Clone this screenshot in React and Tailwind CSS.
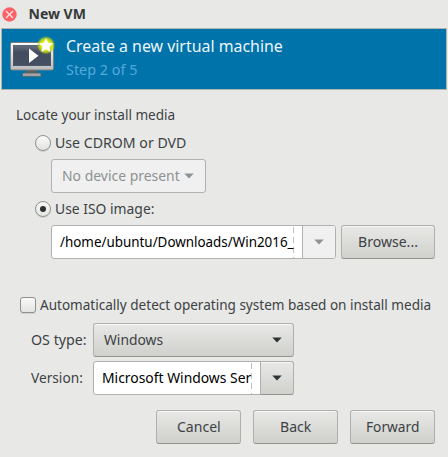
import { useLayoutEffect, useRef, useState } from "react";

// Condenses a line of text so that it takes exactly `w` pixels.
function Fit({ w, children, className = "" }) {
  const ref = useRef(null);
  const [scale, setScale] = useState(1);
  useLayoutEffect(() => {
    setScale(w / ref.current.offsetWidth);
  }, [w]);
  return (
    <span className={`inline-flex shrink-0 justify-start whitespace-nowrap pb-0.5 ${className}`} style={{ width: w }}>
      <span ref={ref} className="inline-block shrink-0 origin-left" style={{ transform: `scaleX(${scale})` }}>
        {children}
      </span>
    </span>
  );
}

function Arrow({ className = "" }) {
  return (
    <svg className={`shrink-0 ${className}`} width="10" height="6" viewBox="0 0 10 6">
      <path d="M.3 .6h9.4L5.5 5a.7.7 0 0 1-1 0z" fill="currentColor" />
    </svg>
  );
}

// Dashed line that marks text running past the edge of an entry.
function Overflow() {
  return (
    <span className="w-px shrink-0 bg-[repeating-linear-gradient(to_bottom,transparent_0_1px,#c0c0c0_1px_7px,transparent_7px_10px)]" />
  );
}

const raised =
  "border border-[#afb0ac] border-b-[#92938f] bg-gradient-to-b from-[#e8e8e6] to-[#d0d0cd] shadow-[inset_0_1px_#f7f7f6]";

function Button({ w, text, className }) {
  return (
    <button className={`flex h-[34px] items-center justify-center rounded-[3px] ${raised} ${className}`}>
      <Fit w={w}>{text}</Fit>
    </button>
  );
}

function Radio({ checked, w, text }) {
  return (
    <label className="flex h-5 items-center gap-1 pl-[35px]">
      <span className="flex size-4 items-center justify-center rounded-full border border-[#90918e] bg-gradient-to-b from-[#fafafa] to-[#e3e3e2] shadow-[0_1px_#cfcfcc]">
        {checked && <span className="size-1.5 rounded-full bg-[#2b3032]" />}
      </span>
      <Fit w={w}>{text}</Fit>
    </label>
  );
}

function MachineIcon() {
  return (
    <svg width="48" height="46" viewBox="0 0 48 46" className="mt-px shrink-0">
      <defs>
        <linearGradient id="frame" x1="0" y1="0" x2="0" y2="1">
          <stop offset="0" stopColor="#ffffff" />
          <stop offset="1" stopColor="#b9bbbc" />
        </linearGradient>
        <linearGradient id="screen" x1="0" y1="0" x2="0" y2="1">
          <stop offset="0" stopColor="#68707f" />
          <stop offset=".35" stopColor="#424c60" />
          <stop offset="1" stopColor="#445063" />
        </linearGradient>
        <radialGradient id="glow">
          <stop offset=".45" stopColor="#e8f000" />
          <stop offset=".72" stopColor="#c8dc10" stopOpacity=".85" />
          <stop offset="1" stopColor="#9acb30" stopOpacity="0" />
        </radialGradient>
      </defs>
      <path d="M18 34h11v4h-11z" fill="#5b6163" />
      <rect x="14.5" y="37" width="18.5" height="3.4" rx="1" fill="#a4a7a7" stroke="#585d5e" strokeWidth=".8" />
      <rect x="2.5" y="6.5" width="43" height="27.5" rx="1.5" fill="url(#frame)" stroke="#7c8284" />
      <rect x="5.3" y="9.3" width="37.4" height="20.4" fill="url(#screen)" stroke="#3a4354" strokeWidth=".6" />
      <path d="M21 12.5v14.5l9.5-7.2z" fill="#fff" />
      <circle cx="38" cy="9.2" r="9.4" fill="url(#glow)" />
      <path d="M38 2.8l2 4.2 4.6.6-3.4 3.2.9 4.6-4.1-2.3-4.1 2.3.9-4.6-3.4-3.2 4.6-.6z" fill="#fff" stroke="#fff" strokeWidth=".6" strokeLinejoin="round" />
    </svg>
  );
}

export default function App() {
  return (
    <div className="flex h-[457px] w-[448px] flex-col overflow-hidden bg-[#e8e8e6] font-['Noto_Sans',sans-serif] text-[15px] leading-5 text-[#3c4244]">
      <header className="flex h-7 shrink-0 items-center gap-3 pl-[1.5px] text-[14px] font-bold text-[#35393b]">
        <svg width="15" height="15" viewBox="0 0 15 15">
          <circle cx="7.5" cy="7.5" r="7.2" fill="#fa6268" />
          <path d="M4 4l7 7M11 4l-7 7" stroke="#fff" strokeOpacity=".85" strokeWidth="1.2" />
        </svg>
        <Fit w={57} className="pt-0.5">New VM</Fit>
      </header>

      <section className="mx-px flex h-[62px] w-[446px] shrink-0 gap-[10px] border border-[#b1b3af] bg-[#0073aa] pl-[6px] pt-[6px]">
        <MachineIcon />
        <div className="-mt-px flex flex-col">
          <Fit w={217} className="h-6 text-[17px] leading-6 text-[#edf5f9]">Create a new virtual machine</Fit>
          <Fit w={71} className="text-[15px] leading-[22px] text-[#55a9da]">Step 2 of 5</Fit>
        </div>
      </section>

      <main className="flex flex-col pt-[15px]">
        <div className="flex h-5 items-center pl-4">
          <Fit w={159}>Locate your install media</Fit>
        </div>
        <div className="mt-2">
          <Radio w={131} text="Use CDROM or DVD" />
        </div>
        <div className="ml-[51px] mt-[6px] flex h-[34px] w-[155px] items-center gap-1 rounded-[3px] border border-[#b1b2af] bg-[#f0f0f0] pl-[10px] text-[#8d9293]">
          <Fit w={118}>No device present</Fit>
          <Arrow />
        </div>
        <div className="mt-[6px]">
          <Radio checked w={99} text="Use ISO image:" />
        </div>
        <div className="ml-[51px] mt-[6px] flex gap-[5px]">
          <div className="flex h-[34px] w-[285px] overflow-hidden rounded-[3px] border border-[#b1b2af] bg-white text-black">
            <div className="flex w-[241px] items-center pl-2">
              <Fit w={234}>/home/ubuntu/Downloads/Win2016_</Fit>
            </div>
            <Overflow />
            <div className="ml-2 flex flex-1 items-center justify-center border-l border-[#b1b2af] bg-[#f0f0f0] text-[#8d9293]">
              <Arrow />
            </div>
          </div>
          <Button text="Browse..." w={60} className="w-[94px]" />
        </div>

        <label className="mt-9 flex h-5 items-center gap-1 pl-5">
          <span className="size-4 rounded-[3px] border border-[#90918e] bg-gradient-to-b from-[#fafafa] to-[#e3e3e2] shadow-[0_1px_#cfcfcc]" />
          <Fit w={391}>Automatically detect operating system based on install media</Fit>
        </label>

        <div className="mt-2 flex h-[34px] items-center pl-[31px]">
          <div className="w-[62px]"><Fit w={56}>OS type:</Fit></div>
          <div className={`flex h-[34px] w-[201px] items-center justify-between rounded-[3px] pl-[10px] pr-[11px] ${raised}`}>
            <Fit w={59}>Windows</Fit>
            <Arrow className="text-[#2e3436]" />
          </div>
        </div>
        <div className="mt-1 flex h-[34px] items-center pl-[31px]">
          <div className="w-[62px]"><Fit w={52}>Version:</Fit></div>
          <div className="flex h-[34px] w-[201px] rounded-[3px] border border-[#b1b2af] bg-white text-black">
            <div className="flex w-[157px] items-center pl-[8px]">
              <Fit w={149}>Microsoft Windows Ser</Fit>
            </div>
            <Overflow />
            <div className={`-my-px -mr-px ml-2 flex flex-1 items-center justify-center rounded-r-[3px] ${raised}`}>
              <Arrow className="text-[#2e3436]" />
            </div>
          </div>
        </div>

        <footer className="mt-[15px] flex justify-end gap-3 pr-[13px]">
          <Button text="Cancel" w={44} className="w-[85px]" />
          <Button text="Back" w={31} className="w-[85px]" />
          <Button text="Forward" w={53} className="w-[85px]" />
        </footer>
      </main>
    </div>
  );
}
